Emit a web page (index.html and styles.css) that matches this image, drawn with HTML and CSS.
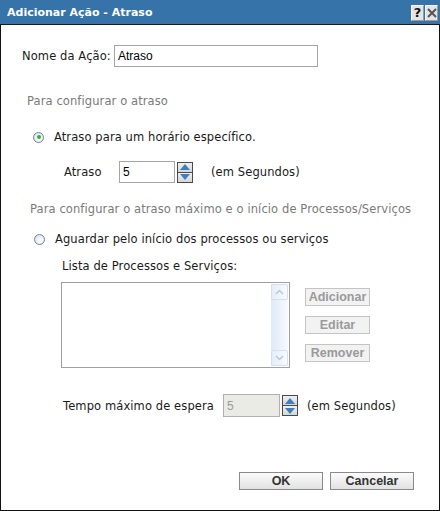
FILE: index.html
```html
<!DOCTYPE html>
<html lang="pt">
<head>
<meta charset="utf-8">
<title>Adicionar Ação - Atraso</title>
<link rel="stylesheet" href="styles.css">
</head>
<body>
<div class="dialog">
  <div class="titlebar">
    <span class="title">Adicionar Ação - Atraso</span>
    <div class="tb-buttons">
      <span class="tb-btn help">?</span>
      <span class="tb-btn close">
        <svg width="10" height="10" viewBox="0 0 10 10"><path d="M1 1 L9 9 M9 1 L1 9" stroke="#555" stroke-width="2"/></svg>
      </span>
    </div>
  </div>
  <div class="content">
    <div class="row row-name">
      <span class="label">Nome da Ação:</span>
      <div class="input name-input">Atraso</div>
    </div>
    <div class="section section1">Para configurar o atraso</div>
    <div class="row radio-row radio1">
      <span class="radio checked"></span>
      <span class="radio-label">Atraso para um horário específico.</span>
    </div>
    <div class="row num-row delay-row">
      <span class="num-label delay-label">Atraso</span>
      <div class="input num-input">5</div>
      <div class="spinner">
        <span class="spin up"><svg width="10" height="6" viewBox="0 0 10 6"><path d="M5 0 L10 6 L0 6 Z" fill="#3f7fc0"/></svg></span>
        <span class="spin down"><svg width="10" height="6" viewBox="0 0 10 6"><path d="M0 0 L10 0 L5 6 Z" fill="#3f7fc0"/></svg></span>
      </div>
      <span class="unit">(em Segundos)</span>
    </div>
    <div class="section section2">Para configurar o atraso máximo e o início de Processos/Serviços</div>
    <div class="row radio-row radio2">
      <span class="radio"></span>
      <span class="radio-label">Aguardar pelo início dos processos ou serviços</span>
    </div>
    <div class="list-label">Lista de Processos e Serviços:</div>
    <div class="list-area">
      <div class="listbox">
        <div class="scrollbar">
          <span class="sb-btn"><svg width="9" height="6" viewBox="0 0 9 6"><path d="M1 5 L4.5 1.5 L8 5" stroke="#b8c8dc" stroke-width="1.5" fill="none"/></svg></span>
          <span class="sb-track"></span>
          <span class="sb-btn"><svg width="9" height="6" viewBox="0 0 9 6"><path d="M1 1 L4.5 4.5 L8 1" stroke="#b8c8dc" stroke-width="1.5" fill="none"/></svg></span>
        </div>
      </div>
      <div class="list-buttons">
        <span class="btn disabled">Adicionar</span>
        <span class="btn disabled">Editar</span>
        <span class="btn disabled">Remover</span>
      </div>
    </div>
    <div class="row num-row tempo-row">
      <span class="num-label tempo-label">Tempo máximo de espera</span>
      <div class="input num-input disabled-input">5</div>
      <div class="spinner">
        <span class="spin up"><svg width="10" height="6" viewBox="0 0 10 6"><path d="M5 0 L10 6 L0 6 Z" fill="#3f7fc0"/></svg></span>
        <span class="spin down"><svg width="10" height="6" viewBox="0 0 10 6"><path d="M0 0 L10 0 L5 6 Z" fill="#3f7fc0"/></svg></span>
      </div>
      <span class="unit">(em Segundos)</span>
    </div>
    <div class="footer">
      <span class="btn main">OK</span>
      <span class="btn main">Cancelar</span>
    </div>
  </div>
</div>
</body>
</html>
```

FILE: styles.css
```css
html, body {
  margin: 0;
  padding: 0;
  background: #fff;
}
.dialog {
  width: 440px;
  height: 511px;
  box-sizing: border-box;
  border: 1px solid #111;
  border-top: none;
  display: flex;
  flex-direction: column;
  font-family: "DejaVu Sans", sans-serif;
  font-size: 11.5px;
  letter-spacing: 0.1px;
  color: #1a1a1a;
}
.titlebar {
  height: 24px;
  margin: 0 -1px;
  background: #3573a8;
  border-bottom: 1px solid #1a1a1a;
  display: flex;
  align-items: center;
  justify-content: space-between;
  padding: 0 2px 0 7px;
}
.title {
  color: #fff;
  font-weight: bold;
  font-size: 11px;
  letter-spacing: 0;
}
.tb-buttons {
  display: flex;
  gap: 1px;
  margin-top: 1px;
}
.tb-btn {
  width: 13px;
  height: 16px;
  box-sizing: border-box;
  background: #e4e4e4;
  border: 1px solid #f4f4f4;
  border-right-color: #9a9a9a;
  border-bottom-color: #9a9a9a;
  display: flex;
  align-items: center;
  justify-content: center;
}
.tb-btn.help {
  font-weight: bold;
  font-size: 13px;
  color: #111;
}
.content {
  flex: 1;
  display: flex;
  flex-direction: column;
}
.row {
  display: flex;
  align-items: center;
}
.row-name {
  margin-top: 20px;
  height: 22px;
  padding-left: 21px;
}
.label {
  width: 92px;
}
.input {
  box-sizing: border-box;
  height: 22px;
  border: 1px solid #a5a5a5;
  font-family: "Liberation Sans", Arial, sans-serif;
  font-size: 12px;
  letter-spacing: 0;
  padding: 0 3px;
  display: flex;
  align-items: center;
  color: #000;
}
.name-input {
  width: 204px;
}
.section {
  height: 16px;
  line-height: 16px;
  color: #7a7a7a;
}
.section1 {
  margin-top: 26px;
  padding-left: 26px;
}
.section2 {
  margin-top: 18px;
  padding-left: 29px;
}
.radio-row {
  height: 16px;
}
.radio1 {
  margin-top: 20px;
  padding-left: 32px;
}
.radio2 {
  margin-top: 14px;
  padding-left: 33px;
}
.radio {
  width: 11px;
  height: 11px;
  box-sizing: border-box;
  border-radius: 50%;
  border: 1px solid #6f86a3;
  background: radial-gradient(circle at 60% 60%, #ffffff 0%, #e8edf3 55%, #c8d3e0 100%);
  display: flex;
  align-items: center;
  justify-content: center;
  margin-right: 10px;
}
.radio.checked::after {
  content: "";
  width: 4px;
  height: 4px;
  border-radius: 50%;
  background: #35b035;
}
.num-row {
  height: 22px;
}
.delay-row {
  margin-top: 16px;
  padding-left: 63px;
}
.delay-label {
  width: 55px;
}
.num-input {
  width: 56px;
}
.spinner {
  display: flex;
  flex-direction: column;
  margin-left: 2px;
}
.spin {
  width: 16px;
  height: 11px;
  box-sizing: border-box;
  background: linear-gradient(#f0f0f0, #d6d6d6);
  border: 1px solid #4a4a4a;
  display: flex;
  align-items: center;
  justify-content: center;
}
.spin.down {
  border-top: none;
  height: 10px;
}
.unit {
  margin-left: 18px;
}
.list-label {
  margin-top: 11px;
  height: 16px;
  line-height: 16px;
  padding-left: 61px;
}
.list-area {
  margin-top: 8px;
  padding-left: 60px;
  display: flex;
  align-items: flex-start;
}
.listbox {
  width: 229px;
  height: 86px;
  box-sizing: border-box;
  border: 1px solid #a0a0a0;
  display: flex;
  justify-content: flex-end;
  padding: 1px;
}
.scrollbar {
  width: 17px;
  display: flex;
  flex-direction: column;
  background: linear-gradient(90deg, #dfe9f8, #f7faff);
}
.sb-btn {
  height: 16px;
  box-sizing: border-box;
  border: 1px solid #d4e0ef;
  border-radius: 2px;
  background: linear-gradient(90deg, #e4edf9, #f8fbff);
  display: flex;
  align-items: center;
  justify-content: center;
}
.sb-track {
  flex: 1;
}
.list-buttons {
  margin-left: 15px;
  margin-top: 6px;
  display: flex;
  flex-direction: column;
  gap: 10px;
}
.btn {
  box-sizing: border-box;
  height: 18px;
  display: flex;
  align-items: center;
  justify-content: center;
  font-family: "Liberation Sans", Arial, sans-serif;
  font-weight: bold;
  font-size: 12.5px;
  letter-spacing: 0;
}
.btn.disabled {
  width: 65px;
  background: #f2f2f2;
  border: 1px solid #c4c4c4;
  color: #9a9a9a;
}
.tempo-row {
  margin-top: 26px;
  padding-left: 62px;
  height: 23px;
}
.tempo-label {
  width: 160px;
}
.disabled-input {
  width: 57px;
  height: 23px;
  background: #ebebe6;
  border-color: #b0b0b0;
  color: #9a9a9a;
}
.tempo-row .unit {
  margin-left: 9px;
}
.footer {
  margin-top: 55px;
  display: flex;
  justify-content: flex-end;
  gap: 7px;
  padding-right: 25px;
}
.btn.main {
  width: 84px;
  height: 18px;
  background: linear-gradient(#fbfbfb, #e2e2e2);
  border: 1px solid #8a8a8a;
  color: #333;
}
```
